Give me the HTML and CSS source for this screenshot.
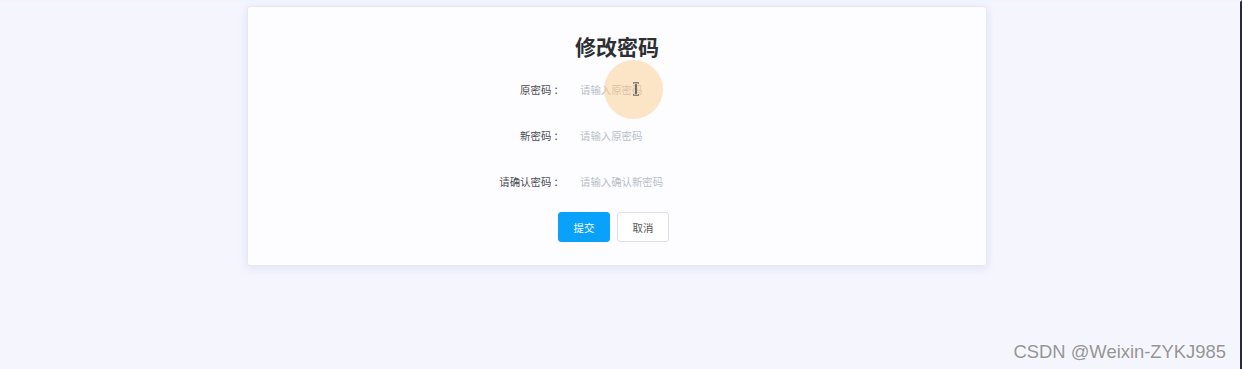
FILE: index.html
```html
<!DOCTYPE html>
<html lang="zh-CN">
<head>
    <meta charset="UTF-8">
    <meta name="viewport" content="width=device-width, initial-scale=1.0">
    <title>修改密码</title>
    <link rel="stylesheet" href="styles.css">
</head>
<body>

<div class="page">
    <div class="card">
        <h1>修改密码</h1>
        <form class="pwd-form" id="pwdForm">
            <div class="row">
                <label class="label" for="oldPwd">原密码 ：</label>
                <input class="field" id="oldPwd" type="password" placeholder="请输入原密码">
            </div>
            <div class="row">
                <label class="label" for="newPwd">新密码 ：</label>
                <input class="field" id="newPwd" type="password" placeholder="请输入原密码">
            </div>
            <div class="row">
                <label class="label" for="confirmPwd">请确认密码 ：</label>
                <input class="field" id="confirmPwd" type="password" placeholder="请输入确认新密码">
            </div>
            <div class="actions">
                <button type="button" class="btn btn-primary">提交</button>
                <button type="button" class="btn">取消</button>
            </div>
        </form>
        <div class="click-mark">
            <svg width="8" height="14" viewBox="0 0 8 14">
                <path d="M1 1h6M1 13h6M4 1v12" stroke="#222" stroke-width="1.2" fill="none"/>
                <path d="M2 1.6h4M2 12.4h4" stroke="#fff" stroke-width="0.6" fill="none"/>
            </svg>
        </div>
    </div>
</div>

<div class="watermark">CSDN @Weixin-ZYKJ985</div>

</body>
</html>
```

FILE: styles.css
```css
html, body {
    margin: 0;
    padding: 0;
}
body {
    font-family: "Noto Sans CJK SC", "Noto Sans", sans-serif;
    background-color: #f5f5fe;
    height: 369px;
    overflow: hidden;
    border-top: 2px solid #eef5fe;
    border-right: 2px solid #2a2a33;
    box-sizing: border-box;
}
.page {
    display: flex;
    justify-content: center;
    padding: 4px 6px 0 0;
}
.card {
    position: relative;
    width: 740px;
    box-sizing: border-box;
    background-color: #fdfdff;
    border: 1px solid #e6e8f4;
    border-radius: 3px;
    box-shadow: 0 2px 8px rgba(180, 190, 230, 0.35);
    padding: 24px 0 23px;
}
h1 {
    margin: 0;
    font-size: 21px;
    line-height: 30px;
    font-weight: bold;
    text-align: center;
    color: #2d2f33;
}
.pwd-form {
    margin: 13px 0 0 194px;
}
.row {
    display: flex;
    align-items: center;
    height: 30px;
    margin-bottom: 16px;
}
.label {
    width: 122px;
    text-align: right;
    font-size: 10.4px;
    color: #4a4c52;
    white-space: nowrap;
}
.field {
    margin-left: 16px;
    width: 200px;
    border: none;
    outline: none;
    background: transparent;
    padding: 0;
    font-family: inherit;
    font-size: 10.4px;
}
.field::placeholder {
    color: #b9bdc8;
}
.actions {
    display: flex;
    gap: 7px;
    margin: 0 0 0 116px;
}
.btn {
    width: 52px;
    height: 30px;
    border: 1px solid #dcdfe6;
    border-radius: 3px;
    background-color: #fff;
    color: #555;
    font-family: inherit;
    font-size: 10.4px;
    padding: 0;
}
.btn-primary {
    background-color: #0aa1fb;
    border-color: #0aa1fb;
    color: #fff;
}
.click-mark {
    position: absolute;
    left: 356px;
    top: 53px;
    width: 59px;
    height: 59px;
    border-radius: 50%;
    background-color: rgba(250, 200, 130, 0.45);
    display: flex;
    align-items: center;
    justify-content: center;
}
.click-mark svg {
    margin: 0 0 1px 4px;
}
.watermark {
    position: absolute;
    right: 16px;
    bottom: 6px;
    font-family: "Liberation Sans", Arial, sans-serif;
    font-size: 18.4px;
    color: #959595;
    text-shadow: 0 0 2px #fff;
}
```
